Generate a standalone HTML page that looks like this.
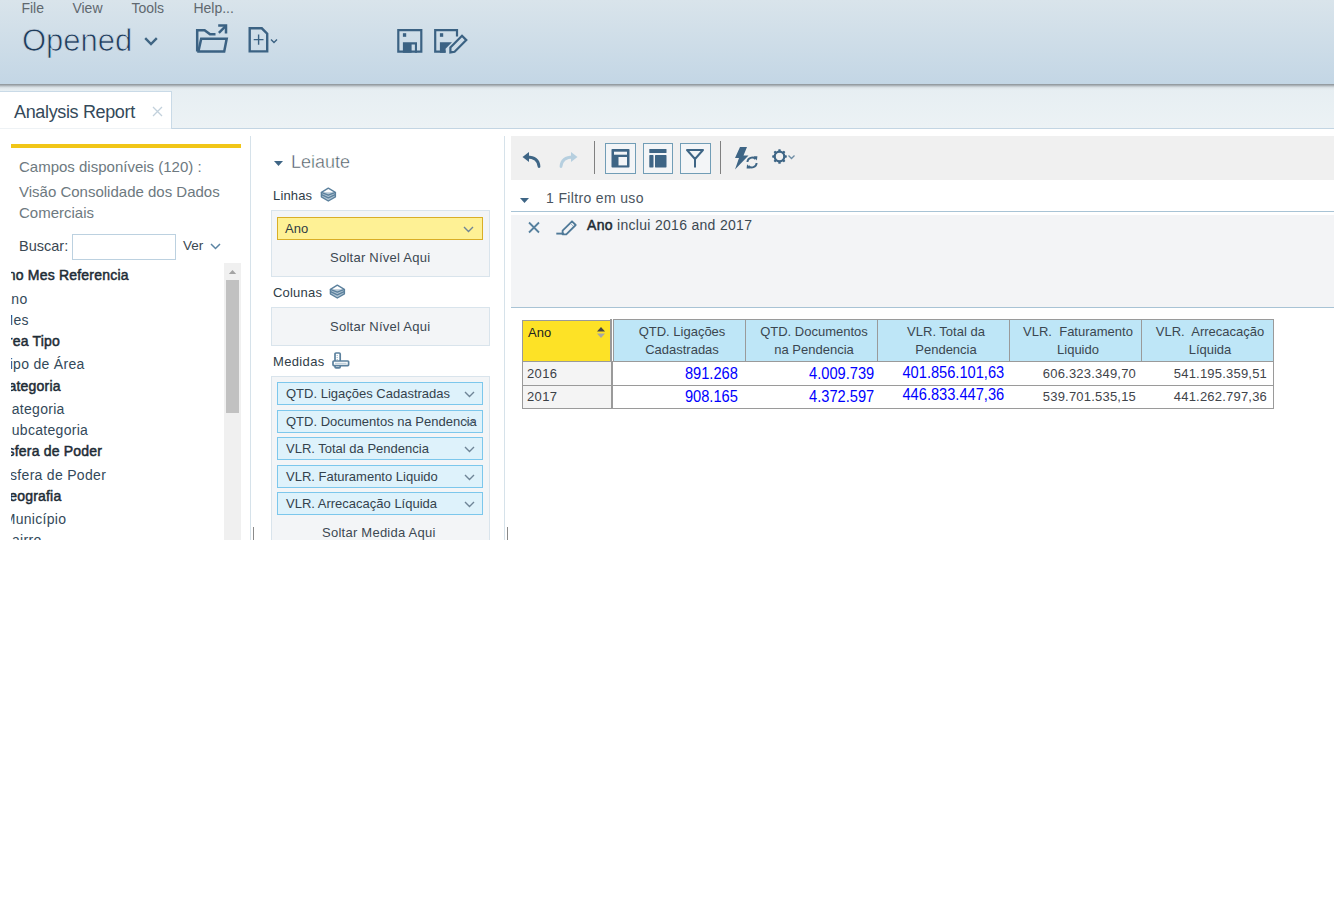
<!DOCTYPE html>
<html><head><meta charset="utf-8">
<style>
*{box-sizing:border-box;margin:0;padding:0}
html,body{width:1334px;height:905px;overflow:hidden;background:#fff;font-family:"Liberation Sans",sans-serif;position:relative}
.a{position:absolute;white-space:nowrap;line-height:1}
#hdr{left:0;top:0;width:1334px;height:85px;background:linear-gradient(#d9e4eb,#c3d6e5)}
#hshadow{left:0;top:84px;width:1334px;height:6px;background:linear-gradient(#8c9398 0,#9ea5aa 1px,#b9c0c5 2px,#d2d9de 3px,#e0e7eb 4px,#e7eef2 6px)}
#tabbar{left:0;top:86px;width:1334px;height:43px;background:linear-gradient(#e6eef2,#ecf2f5);border-bottom:1px solid #c3d5e3}
.menu{top:1px;font-size:14px;color:#5f686f;margin-left:-.6px}
#tab{left:0;top:91px;width:172px;height:38px;background:#fff;border:1px solid #c9dae7;border-left:none;border-bottom:none}
.f13{font-size:13px}
.sol{letter-spacing:.25px}
.tree{left:11px;top:262px;width:213px;height:278px;overflow:hidden}
.tree div{position:absolute;white-space:nowrap;line-height:1;font-size:14px;transform:translateX(-100%)}
.tree .b{color:#1e2c36;-webkit-text-stroke:.5px #1e2c36;letter-spacing:.2px}
.tree .r{color:#33495a;letter-spacing:.3px}
.box{border:1px solid #d9e4ec;background:#f3f5f7}
.mitem{left:277px;width:206px;height:23px;background:#def2fb;border:1px solid #7cc7ec}
.mitem span{position:absolute;left:8px;top:4px;font-size:13px;color:#34424d;line-height:1}
.chev{position:absolute}
.sep{background:#808080;width:1px}
.tb{width:31px;height:31px;border:1px solid #719db6;background:#f3f5f7;top:143px}
th,td{font-weight:normal}
.hc{background:#bee6f7;border:1px solid #9a9a9a;color:#3b4650;font-size:13px;text-align:center;line-height:18px;padding-left:5px}
</style></head><body>
<div id="hdr" class="a"></div>
<div id="tabbar" class="a"></div>
<div id="hshadow" class="a"></div>
<div class="a menu" style="left:22px">File</div>
<div class="a menu" style="left:73px">View</div>
<div class="a menu" style="left:132px">Tools</div>
<div class="a menu" style="left:194px">Help...</div>
<div class="a" style="left:22px;top:25px;font-size:31px;color:#1f3d5a;-webkit-text-stroke:.75px #cfdce6">Opened</div>
<svg class="a" style="left:143px;top:36px" width="16" height="12" viewBox="0 0 16 12"><path d="M2.2 2.2 L8 8 L13.8 2.2" fill="none" stroke="#3f6583" stroke-width="2.4"/></svg>
<!-- folder icon -->
<svg class="a" style="left:194px;top:22px" width="36" height="34" viewBox="0 0 36 34">
<g fill="none" stroke="#3b6283" stroke-width="2.5" stroke-linejoin="miter">
<path d="M3.2 29.5 V8.2 H10.6 L16 12.3 H21.5"/>
<path d="M3.2 29.5 H30.2 L32.7 16.7 H7.2 L4.5 29"/>
<path d="M24.9 10.8 L31.6 4.1"/>
<path d="M24.2 3.6 H32 V11.4"/>
</g>
</svg>
<!-- new doc icon -->
<svg class="a" style="left:246px;top:25px" width="34" height="30" viewBox="0 0 34 30">
<g fill="none" stroke="#3b6283" stroke-width="2.4">
<path d="M3.7 26.4 V3.3 H15.8 L21.2 8.7 V26.4 Z"/>
</g>
<path d="M7.7 14.6 H17.5 M12.6 9.6 V19.7" stroke="#3b6283" stroke-width="1.4"/>
<path d="M25 14.6 L28 17.6 L31 14.6" fill="none" stroke="#3b6283" stroke-width="1.4"/>
</svg>
<!-- save icon -->
<svg class="a" style="left:395px;top:27px" width="30" height="28" viewBox="0 0 30 28">
<path d="M3.3 3.1 H26.3 V24.6 H3.3 Z" fill="none" stroke="#3b6283" stroke-width="2.2"/>
<rect x="7.9" y="6.2" width="3.3" height="3.6" fill="#3b6283"/>
<path d="M7.9 15.2 H22 V25.7 H19.9 V17.6 H16.6 V25.7 H7.9 Z" fill="#3b6283"/>
</svg>
<!-- save as icon -->
<svg class="a" style="left:432px;top:27px" width="38" height="28" viewBox="0 0 38 28">
<path d="M25 9.5 V3.1 H3.2 V24.6 H13.6" fill="none" stroke="#3b6283" stroke-width="2.2"/>
<rect x="7.9" y="6.2" width="3.3" height="3.6" fill="#3b6283"/>
<path d="M7.9 15.2 H20 L16.5 18.8 L13.6 21.7 V25.7 H7.9 Z" fill="#3b6283"/>
<path d="M18.4 25.4 V20.4 L30 8.8 L34.3 13.1 L22.6 24.8 Z" fill="none" stroke="#3b6283" stroke-width="2.2" stroke-linejoin="miter"/>
</svg>

<div id="tab" class="a"></div>
<div class="a" style="left:14px;top:103px;font-size:18px;letter-spacing:-.35px;color:#34495a">Analysis Report</div>
<svg class="a" style="left:152px;top:106px" width="11" height="11" viewBox="0 0 11 11"><path d="M1 1 L10 10 M10 1 L1 10" stroke="#c2d1dc" stroke-width="1.3"/></svg>
<div class="a" style="left:0;top:128px;width:171px;height:1px;background:#eef2f5"></div>

<!-- LEFT PANEL -->
<div class="a" style="left:11px;top:144px;width:230px;height:4px;background:#f1c617"></div>
<div class="a" style="left:19px;top:159px;font-size:15px;color:#6d7980">Campos disponíveis (120) :</div>
<div class="a" style="left:19px;top:184px;font-size:15px;color:#6d7980">Visão Consolidade dos Dados</div>
<div class="a" style="left:19px;top:205px;font-size:15px;color:#6d7980">Comerciais</div>
<div class="a" style="left:19px;top:238.5px;font-size:14.5px;color:#3a4853">Buscar:</div>
<div class="a" style="left:72px;top:234px;width:104px;height:26px;border:1px solid #bcd1e0;background:#fff"></div>
<div class="a" style="left:183px;top:239px;font-size:13.5px;color:#3a4853">Ver</div>
<svg class="a" style="left:209px;top:242px" width="13" height="9" viewBox="0 0 13 9"><path d="M2 2 L6.5 6.5 L11 2" fill="none" stroke="#5b84a3" stroke-width="1.5"/></svg>
<div class="a tree">
 <div class="b" style="left:117.7px;top:6px">Ano Mes Referencia</div>
 <div class="r" style="left:16.5px;top:30px">Ano</div>
 <div class="r" style="left:17.9px;top:51px">Mes</div>
 <div class="b" style="left:49.0px;top:72px">Área Tipo</div>
 <div class="r" style="left:73.6px;top:95px">Tipo de Área</div>
 <div class="b" style="left:49.7px;top:117px">Categoria</div>
 <div class="r" style="left:53.7px;top:140px">Categoria</div>
 <div class="r" style="left:77.2px;top:161px">Subcategoria</div>
 <div class="b" style="left:91.2px;top:182px">Esfera de Poder</div>
 <div class="r" style="left:95.1px;top:206px">Esfera de Poder</div>
 <div class="b" style="left:50.4px;top:227px">Geografia</div>
 <div class="r" style="left:55.3px;top:250px">Município</div>
 <div class="r" style="left:30.5px;top:271px">Bairro</div>
</div>
<div class="a" style="left:224px;top:263px;width:17px;height:277px;background:#f0f0f0"></div>
<svg class="a" style="left:228px;top:269px" width="9" height="6" viewBox="0 0 9 6"><path d="M0.8 5 L4.5 1 L8.2 5 Z" fill="#a3a3a3"/></svg>
<div class="a" style="left:226px;top:280px;width:13px;height:133px;background:#c1c1c1"></div>
<div class="a" style="left:250px;top:136px;width:1px;height:404px;background:#d6e2ea"></div>
<div class="a" style="left:253px;top:527px;width:1px;height:13px;background:#8a8a8a"></div>

<!-- LEIAUTE PANEL -->
<svg class="a" style="left:273px;top:160px" width="11" height="7" viewBox="0 0 11 7"><path d="M1 1 H10 L5.5 6 Z" fill="#3e6585"/></svg>
<div class="a" style="left:291px;top:153px;font-size:18px;color:#47545f;-webkit-text-stroke:.45px #fff">Leiaute</div>
<div class="a f13" style="left:273px;top:189px;color:#2f3d47;letter-spacing:.15px">Linhas</div>
<svg class="a layers" style="left:320px;top:187px" width="17" height="16" viewBox="0 0 17 16"><path d="M1.4 5.3 V9.8 L8.3 14 L15.4 9.8 V5.3 Z" fill="#b3c6d4"/><g fill="none" stroke="#5b809d" stroke-width="1.4" stroke-linejoin="round"><path d="M8.3 1.2 L15.4 5.3 L8.3 8.2 L1.4 5.3 Z"/><path d="M1.4 5.3 V9.8 L8.3 14 L15.4 9.8 V5.3"/><path d="M1.6 7.6 L8.3 10.9 L15.2 7.6"/></g></svg>
<div class="a box" style="left:271px;top:210px;width:219px;height:67px"></div>
<div class="a" style="left:277px;top:217px;width:206px;height:23px;background:#fef195;border:1px solid #d9ae26"></div>
<div class="a f13" style="left:285px;top:222px;color:#2f3b44">Ano</div>
<svg class="a" style="left:462px;top:225px" width="13" height="9" viewBox="0 0 13 9"><path d="M2 2 L6.5 6.5 L11 2" fill="none" stroke="#6f8597" stroke-width="1.4"/></svg>
<div class="a f13 sol" style="left:330px;top:251px;color:#3c4852">Soltar Nível Aqui</div>
<div class="a f13" style="left:273px;top:286px;color:#2f3d47;letter-spacing:.2px">Colunas</div>
<svg class="a layers" style="left:329px;top:284px" width="17" height="16" viewBox="0 0 17 16"><path d="M1.4 5.3 V9.8 L8.3 14 L15.4 9.8 V5.3 Z" fill="#b3c6d4"/><g fill="none" stroke="#5b809d" stroke-width="1.4" stroke-linejoin="round"><path d="M8.3 1.2 L15.4 5.3 L8.3 8.2 L1.4 5.3 Z"/><path d="M1.4 5.3 V9.8 L8.3 14 L15.4 9.8 V5.3"/><path d="M1.6 7.6 L8.3 10.9 L15.2 7.6"/></g></svg>
<div class="a box" style="left:271px;top:307px;width:219px;height:39px"></div>
<div class="a f13 sol" style="left:330px;top:320px;color:#3c4852">Soltar Nível Aqui</div>
<div class="a f13" style="left:273px;top:355px;color:#2f3d47;letter-spacing:.35px">Medidas</div>
<svg class="a" style="left:331px;top:351px" width="20" height="19" viewBox="0 0 20 19"><g stroke="#5b809d" stroke-width="1.7"><rect x="4" y="2" width="5.2" height="14.8" rx="1" fill="#fff"/><rect x="2" y="10" width="15.6" height="4.6" rx="0.8" fill="#fff"/></g><path d="M5.5 4.5 H7 M5.5 6.5 H7 M5.5 8.5 H7 M4 12.3 H15.5" stroke="#a9bfcf" stroke-width="0.9"/></svg>
<div class="a box" style="left:271px;top:376px;width:219px;height:164px;border-bottom:none"></div>
<div class="a mitem" style="top:382px"><span>QTD. Ligações Cadastradas</span><svg class="chev" style="left:186px;top:8px" width="11" height="7" viewBox="0 0 11 7"><path d="M1 1 L5.5 5.5 L10 1" fill="none" stroke="#6f8597" stroke-width="1.4"/></svg></div>
<div class="a mitem" style="top:410px"><span>QTD. Documentos na Pendencia</span><svg class="chev" style="left:186px;top:8px" width="11" height="7" viewBox="0 0 11 7"><path d="M1 1 L5.5 5.5 L10 1" fill="none" stroke="#6f8597" stroke-width="1.4"/></svg></div>
<div class="a mitem" style="top:437px"><span>VLR. Total da Pendencia</span><svg class="chev" style="left:186px;top:8px" width="11" height="7" viewBox="0 0 11 7"><path d="M1 1 L5.5 5.5 L10 1" fill="none" stroke="#6f8597" stroke-width="1.4"/></svg></div>
<div class="a mitem" style="top:465px"><span>VLR. Faturamento Liquido</span><svg class="chev" style="left:186px;top:8px" width="11" height="7" viewBox="0 0 11 7"><path d="M1 1 L5.5 5.5 L10 1" fill="none" stroke="#6f8597" stroke-width="1.4"/></svg></div>
<div class="a mitem" style="top:492px"><span>VLR. Arrecacação Líquida</span><svg class="chev" style="left:186px;top:8px" width="11" height="7" viewBox="0 0 11 7"><path d="M1 1 L5.5 5.5 L10 1" fill="none" stroke="#6f8597" stroke-width="1.4"/></svg></div>
<div class="a f13 sol" style="left:322px;top:526px;color:#3c4852">Soltar Medida Aqui</div>
<div class="a" style="left:504px;top:136px;width:1px;height:404px;background:#d6e2ea"></div>
<div class="a" style="left:507px;top:527px;width:1px;height:13px;background:#8a8a8a"></div>

<!-- MAIN -->
<div class="a" style="left:511px;top:136px;width:823px;height:44px;background:#f0f0f0"></div>
<svg class="a" style="left:520px;top:150px" width="23" height="20" viewBox="0 0 23 20"><path d="M19 16.5 C18.5 10 14 7 7 7" fill="none" stroke="#3e6585" stroke-width="2.8" stroke-linecap="round"/><path d="M2.5 7 L9 2 V12 Z" fill="#3e6585"/></svg>
<svg class="a" style="left:557px;top:150px" width="23" height="20" viewBox="0 0 23 20"><path d="M4 16.5 C4.5 10 9 7 16 7" fill="none" stroke="#b6cfdf" stroke-width="2.8" stroke-linecap="round"/><path d="M20.5 7 L14 2 V12 Z" fill="#b6cfdf"/></svg>
<div class="a sep" style="left:594px;top:141px;height:33px"></div>
<div class="a tb" style="left:605px"></div>
<div class="a tb" style="left:643px;width:30px"></div>
<div class="a tb" style="left:680px"></div>
<svg class="a" style="left:611px;top:149px" width="19" height="19" viewBox="0 0 19 19"><rect x="0.5" y="0" width="18" height="18.5" rx="0.8" fill="#3e6585"/><rect x="3" y="2.7" width="13" height="3" fill="#f3f5f7"/><rect x="7.5" y="8" width="8.5" height="8.4" fill="#f3f5f7"/></svg>
<svg class="a" style="left:649px;top:149px" width="18" height="19" viewBox="0 0 18 19"><rect x="0.3" y="0" width="17.2" height="4" rx="0.6" fill="#3e6585"/><rect x="0.3" y="6.1" width="4.2" height="12.3" rx="0.6" fill="#3e6585"/><rect x="6" y="6.1" width="11.5" height="12.3" rx="0.6" fill="#3e6585"/></svg>
<svg class="a" style="left:685px;top:148px" width="20" height="21" viewBox="0 0 20 21"><path d="M2 2 H18 L10 11 Z" fill="none" stroke="#3e6585" stroke-width="2" stroke-linejoin="round"/><path d="M10 11 V19.5" stroke="#3e6585" stroke-width="2"/></svg>
<div class="a sep" style="left:720px;top:141px;height:33px"></div>
<svg class="a" style="left:733px;top:146px" width="27" height="25" viewBox="0 0 27 25"><path d="M7 1 H14 L10.5 9.5 H15.5 L2 23.5 L6 12 H2 Z" fill="#3e6585"/><g fill="none" stroke="#3e6585" stroke-width="1.9"><path d="M14.4 16 A4.7 4.7 0 0 1 22.6 13.2"/><path d="M23.6 17 A4.7 4.7 0 0 1 15.4 19.9"/></g><path d="M20.4 10.2 L24.4 10.2 L23.9 14.6 Z" fill="#3e6585"/><path d="M17.6 22.6 L13.6 22.6 L14.1 18.2 Z" fill="#3e6585"/></svg>
<svg class="a" style="left:771px;top:148px" width="26" height="18" viewBox="0 0 26 18"><g fill="#3e6585"><rect x="7.3" y="1.2" width="2.4" height="3" rx="0.6" transform="rotate(0 8.5 8.5)"/><rect x="7.3" y="1.2" width="2.4" height="3" rx="0.6" transform="rotate(45 8.5 8.5)"/><rect x="7.3" y="1.2" width="2.4" height="3" rx="0.6" transform="rotate(90 8.5 8.5)"/><rect x="7.3" y="1.2" width="2.4" height="3" rx="0.6" transform="rotate(135 8.5 8.5)"/><rect x="7.3" y="1.2" width="2.4" height="3" rx="0.6" transform="rotate(180 8.5 8.5)"/><rect x="7.3" y="1.2" width="2.4" height="3" rx="0.6" transform="rotate(225 8.5 8.5)"/><rect x="7.3" y="1.2" width="2.4" height="3" rx="0.6" transform="rotate(270 8.5 8.5)"/><rect x="7.3" y="1.2" width="2.4" height="3" rx="0.6" transform="rotate(315 8.5 8.5)"/></g><circle cx="8.5" cy="8.5" r="4.8" fill="none" stroke="#3e6585" stroke-width="2.2"/><path d="M17.5 7.5 L20.5 10.5 L23.5 7.5" fill="none" stroke="#6d8ca4" stroke-width="1.3"/></svg>

<svg class="a" style="left:519px;top:197px" width="11" height="7" viewBox="0 0 11 7"><path d="M1 1 H10 L5.5 6 Z" fill="#3e6585"/></svg>
<div class="a" style="left:546px;top:191px;font-size:14px;letter-spacing:.35px;color:#4a5560">1 Filtro em uso</div>
<div class="a" style="left:511px;top:211px;width:823px;height:1px;background:#a8c3d5"></div>
<div class="a" style="left:511px;top:215px;width:823px;height:93px;background:#f3f4f6;border-bottom:1px solid #a8c3d5"></div>
<svg class="a" style="left:527px;top:221px" width="14" height="13" viewBox="0 0 14 13"><path d="M2 1.5 L12 11.5 M12 1.5 L2 11.5" stroke="#56809e" stroke-width="1.8"/></svg>
<svg class="a" style="left:555px;top:219px" width="23" height="17" viewBox="0 0 23 17"><path d="M1.3 14.6 H9" stroke="#4f7998" stroke-width="1.9"/><path d="M7.6 11.6 L17 2.3 L20.7 6 L11.3 15.3 H7.6 Z" fill="none" stroke="#4f7998" stroke-width="1.8" stroke-linejoin="round"/><path d="M15.8 4.8 L18 7" stroke="#9fb6c8" stroke-width="1"/></svg>
<div class="a" style="left:587px;top:218px;font-size:14px;letter-spacing:.3px;color:#3c4852"><span style="color:#1d2a33;-webkit-text-stroke:.5px #1d2a33">Ano</span> inclui 2016 and 2017</div>

<!-- TABLE -->
<div class="a" style="left:522px;top:320px;width:89px;height:42px;background:#fde226;border:1px solid #9a9a9a;border-right:none"></div>
<div class="a" style="left:610px;top:319px;width:2px;height:43px;background:#9a9a9a"></div><div class="a" style="left:611px;top:362px;width:2px;height:47px;background:#9a9a9a"></div>
<div class="a f13" style="left:528px;top:326px;color:#222">Ano</div>
<svg class="a" style="left:596px;top:326px" width="10" height="13" viewBox="0 0 10 13"><path d="M1 5.5 L5 1 L9 5.5 Z" fill="#464646"/><path d="M1 7.5 L5 12 L9 7.5 Z" fill="#a7a7a7"/></svg>
<div class="a" style="left:522px;top:361px;width:89px;height:25px;background:#f4f4f4;border:1px solid #9a9a9a;border-right:none"></div>
<div class="a" style="left:522px;top:385px;width:89px;height:24px;background:#f4f4f4;border:1px solid #9a9a9a;border-right:none"></div>
<div class="a f13" style="left:527px;top:367px;color:#3b4046;letter-spacing:.35px">2016</div>
<div class="a f13" style="left:527px;top:390px;color:#3b4046;letter-spacing:.35px">2017</div>

<div class="a hc" style="left:613px;top:319px;width:133px;height:43px;padding-top:3px">QTD. Ligações<br>Cadastradas</div>
<div class="a hc" style="left:745px;top:319px;width:133px;height:43px;padding-top:3px">QTD. Documentos<br>na Pendencia</div>
<div class="a hc" style="left:877px;top:319px;width:133px;height:43px;padding-top:3px">VLR. Total da<br>Pendencia</div>
<div class="a hc" style="left:1009px;top:319px;width:133px;height:43px;padding-top:3px">VLR.&nbsp; Faturamento<br>Liquido</div>
<div class="a hc" style="left:1141px;top:319px;width:133px;height:43px;padding-top:3px">VLR.&nbsp; Arrecacação<br>Líquida</div>
<div class="a" style="left:612px;top:361px;width:662px;height:25px;border:1px solid #9a9a9a;border-top:none;background:#fff"></div>
<div class="a" style="left:612px;top:385px;width:662px;height:24px;border:1px solid #9a9a9a;background:#fff"></div>
<div class="a" style="left:612px;top:361px;width:662px;height:1px;background:#9a9a9a"></div>

<div class="a" style="right:596px;top:366px;font-size:16px;transform:scaleX(.915);transform-origin:100% 50%;color:#0000ff">891.268</div>
<div class="a" style="right:460px;top:366px;font-size:16px;transform:scaleX(.915);transform-origin:100% 50%;color:#0000ff">4.009.739</div>
<div class="a" style="right:330px;top:365px;font-size:16px;transform:scaleX(.915);transform-origin:100% 50%;color:#0000ff">401.856.101,63</div>
<div class="a f13" style="right:198px;top:367px;color:#3f444a;letter-spacing:.2px">606.323.349,70</div>
<div class="a f13" style="right:67px;top:367px;color:#3f444a;letter-spacing:.2px">541.195.359,51</div>
<div class="a" style="right:596px;top:389px;font-size:16px;transform:scaleX(.915);transform-origin:100% 50%;color:#0000ff">908.165</div>
<div class="a" style="right:460px;top:389px;font-size:16px;transform:scaleX(.915);transform-origin:100% 50%;color:#0000ff">4.372.597</div>
<div class="a" style="right:330px;top:387px;font-size:16px;transform:scaleX(.915);transform-origin:100% 50%;color:#0000ff">446.833.447,36</div>
<div class="a f13" style="right:198px;top:390px;color:#3f444a;letter-spacing:.2px">539.701.535,15</div>
<div class="a f13" style="right:67px;top:390px;color:#3f444a;letter-spacing:.2px">441.262.797,36</div>
</body></html>
